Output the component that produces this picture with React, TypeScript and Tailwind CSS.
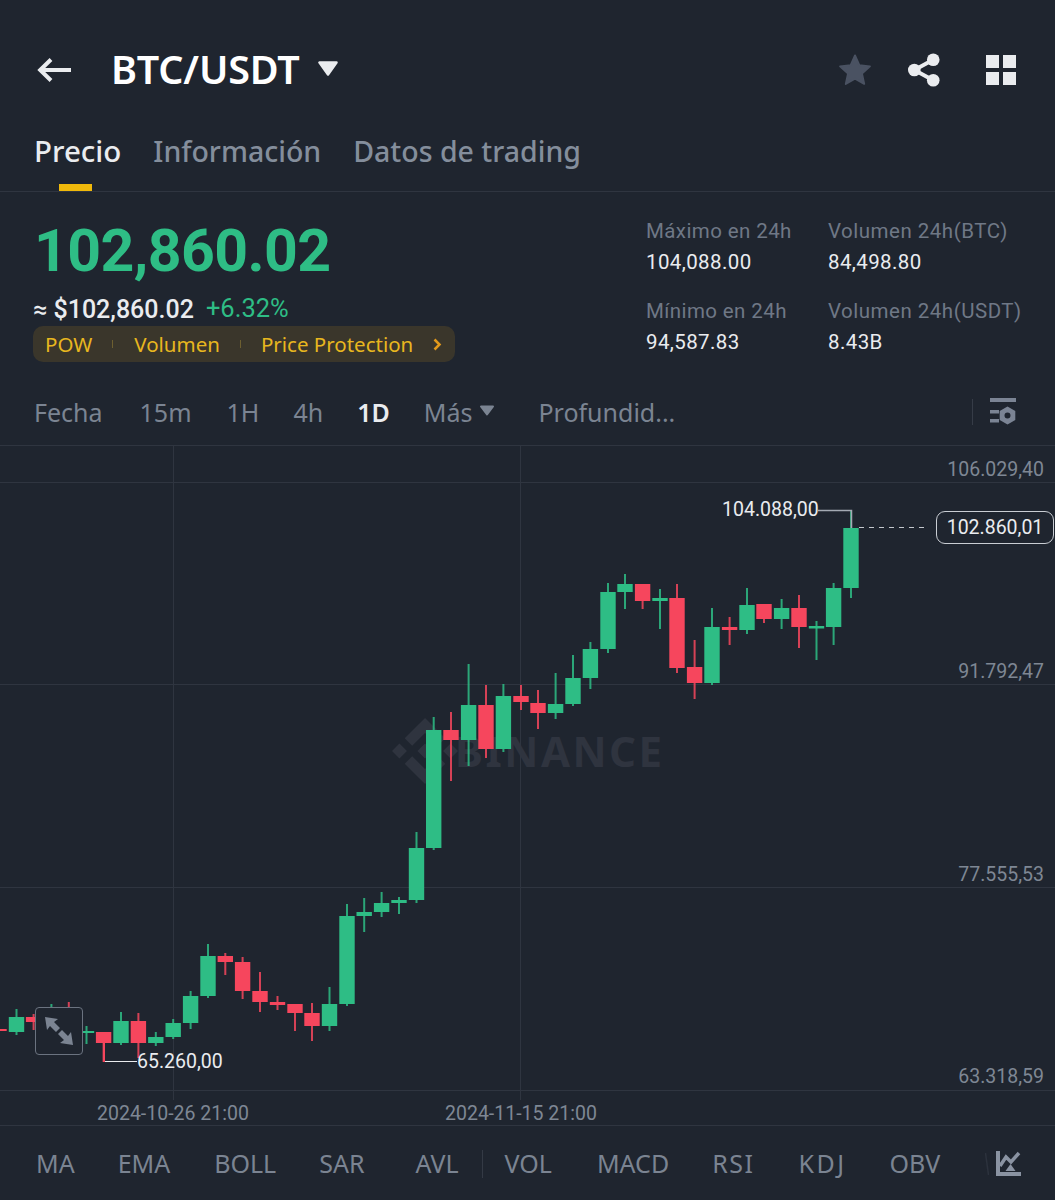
const G = '#2ebd85';
const R = '#f6465d';

// [centre x, wick top, body top, body bottom, wick bottom, green?]
const candles: [number, number, number, number, number, boolean][] = [
  [851, 510, 528, 588, 598, true],
  [833.6, 583, 588, 627, 645, true],
  [816.5, 621, 626, 628.5, 660, true],
  [799, 595, 608, 627, 648, false],
  [781.6, 599, 608, 619, 629, true],
  [764, 604, 604, 619, 623, false],
  [747, 588, 605, 630, 634, true],
  [729.6, 617, 627, 630, 645, false],
  [712, 608, 627, 683, 685, true],
  [694.6, 640, 667, 683, 699, false],
  [677, 584, 598, 668, 673, false],
  [660, 589, 598, 601, 629, true],
  [642.6, 584, 584, 601, 609, false],
  [625, 574, 584, 592, 609, true],
  [608, 583, 592, 649, 653, true],
  [590.4, 642, 649, 678, 689, true],
  [573, 655, 678, 704, 706, true],
  [555.6, 673, 704, 713, 719, true],
  [538, 690, 703, 713, 729, false],
  [521, 685, 696, 702, 710, false],
  [503.4, 684, 696, 749, 752, true],
  [486, 685, 705, 749, 758, false],
  [468.6, 664, 705, 740, 766, true],
  [451, 712, 730, 740, 781, false],
  [433.7, 717, 730, 848, 850, true],
  [416.5, 832, 848, 900, 903, true],
  [399, 897, 900, 903, 914, true],
  [381.6, 892, 903, 912, 917, true],
  [364.2, 898, 912, 916, 932, true],
  [347, 904, 916, 1004, 1006, true],
  [329.5, 987, 1004, 1026, 1031, true],
  [312, 1003, 1013, 1026, 1041, false],
  [295, 1004, 1004, 1013, 1031, false],
  [277.5, 996, 1002, 1005, 1010, false],
  [260, 972, 991, 1002, 1012, false],
  [242.6, 957, 962, 991, 999, false],
  [225.3, 953, 956, 962, 975, false],
  [208, 944, 956, 996, 998, true],
  [190.6, 991, 996, 1023, 1029, true],
  [173.2, 1019, 1023, 1037, 1039, true],
  [155.8, 1032, 1037, 1043, 1046, true],
  [138.4, 1013, 1021, 1043, 1058, false],
  [121, 1012, 1021, 1043, 1045, true],
  [103.6, 1032, 1032, 1043, 1062, false],
  [86.5, 1026, 1031, 1032.5, 1044, true],
  [68.8, 1002, 1012, 1030, 1040, false],
  [51.4, 1004, 1012, 1030, 1040, true],
  [33.6, 1014, 1017, 1022, 1030, false],
  [16.5, 1009, 1017, 1032, 1035, true],
  [-1, 1024, 1029, 1031, 1045, false],
];

export default function App() {
  return (
    <div className="w-[1055px] h-[1200px] overflow-hidden bg-[#1f252f] font-['Noto_Sans',sans-serif] flex flex-col">
      {/* Header */}
      <div className="h-[70px] mt-[35px] flex items-center pl-[37px] pr-[39px]">
        <svg width="35" height="26" viewBox="0 0 35 26" fill="none" stroke="#eaecef" strokeWidth="4">
          <path d="M34 13H3M14 2.5 3.2 13 14 23.5" />
        </svg>
        <span className="ml-[39px] text-[39.5px] leading-none font-semibold text-white tracking-[-0.2px]">BTC/USDT</span>
        <svg className="ml-[17px] mb-[3px]" width="22" height="15" viewBox="0 0 22 15">
          <path d="M2.5 1.5h17L11 13.5z" fill="#eaecef" stroke="#eaecef" strokeWidth="2.5" strokeLinejoin="round" />
        </svg>
        <div className="ml-auto flex items-center">
          <svg width="34" height="32" viewBox="0 0 36 34" className="mb-[1px]">
            <path d="M18 1.5l4.6 10.4 11.3 1.2-8.5 7.6 2.4 11.1L18 26.1 8.2 31.8l2.4-11.1L2.100 13.100l11.300-1.200z" fill="#4a5262" stroke="#4a5262" strokeWidth="2" strokeLinejoin="round" />
          </svg>
          <svg className="ml-[36px]" width="33" height="34" viewBox="0 0 34 34" fill="#eaecef" stroke="#eaecef">
            <circle cx="26" cy="6.500" r="6.500" stroke="none" />
            <circle cx="6.500" cy="17" r="6.500" stroke="none" />
            <circle cx="26" cy="27.500" r="6.500" stroke="none" />
            <path d="M26 6.500 6.500 17 26 27.500" fill="none" strokeWidth="4" />
          </svg>
          <div className="ml-[45px] grid grid-cols-2 gap-[4px] w-[30px]">
            <div className="h-[13px] bg-[#eaecef]" />
            <div className="h-[13px] bg-[#eaecef]" />
            <div className="h-[13px] bg-[#eaecef]" />
            <div className="h-[13px] bg-[#eaecef]" />
          </div>
        </div>
      </div>

      {/* Tabs */}
      <div className="h-[87px] border-b border-[#2f3540] flex items-start pl-[34px] text-[28.5px] leading-none font-medium relative">
        <div className="mt-[31px] flex items-baseline gap-[32px] text-[#848e9c]">
          <span className="text-[#eaecef] text-[29.5px]">Precio</span>
          <span>Información</span>
          <span>Datos de trading</span>
        </div>
        <div className="absolute left-[59px] bottom-0 w-[33px] h-[7px] bg-[#f0b90b]" />
      </div>

      {/* Stats */}
      <div className="h-[180px] flex">
        <div className="w-[646px] pl-[33px] pt-[26px] flex flex-col">
          <div className="h-[64px] pl-[1px] flex items-center text-[59px] leading-none font-bold text-[#2ebd85] font-['Roboto',sans-serif] tracking-[-0.6px]">
            102,860.02
          </div>
          <div className="mt-[15px] h-[24px] flex items-center font-['Roboto',sans-serif] leading-none">
            <span className="text-[25px] font-medium text-[#eaecef]">≈ $102,860.02</span>
            <span className="ml-[12px] text-[25.5px] text-[#2ebd85]">+6.32%</span>
          </div>
          <div className="mt-[5px] w-[422px] h-[36px] rounded-[10px] bg-[#3a362b] flex items-center pl-[12px] text-[20.5px] text-[#e8b71f] leading-none">
            <span>POW</span>
            <span className="ml-[20px] w-[1px] h-[8px] bg-[#6d5f30]" />
            <span className="ml-[21px]">Volumen</span>
            <span className="ml-[20px] w-[1px] h-[8px] bg-[#6d5f30]" />
            <span className="ml-[20px]">Price Protection</span>
            <svg className="ml-[19px]" width="11" height="13" viewBox="0 0 11 13" fill="none" stroke="#e39a1c" strokeWidth="2.500">
              <path d="M2.500 1.500 7.500 6.500 2.500 11.500" />
            </svg>
          </div>
        </div>
        <div className="w-[182px] pt-[27px] font-['Roboto',sans-serif]">
          <div className="text-[20.5px] leading-[24px] text-[#6f7886] tracking-[0.4px]">Máximo en 24h</div>
          <div className="mt-[7px] text-[20.5px] leading-[24px] text-[#eaecef] tracking-[0.4px]">104,088.00</div>
          <div className="mt-[25px] text-[20.5px] leading-[24px] text-[#6f7886] tracking-[0.4px]">Mínimo en 24h</div>
          <div className="mt-[7px] text-[20.5px] leading-[24px] text-[#eaecef] tracking-[0.4px]">94,587.83</div>
        </div>
        <div className="pt-[27px] font-['Roboto',sans-serif]">
          <div className="text-[20.5px] leading-[24px] text-[#6f7886] tracking-[0.5px]">Volumen 24h(BTC)</div>
          <div className="mt-[7px] text-[20.5px] leading-[24px] text-[#eaecef] tracking-[0.4px]">84,498.80</div>
          <div className="mt-[25px] text-[20.5px] leading-[24px] text-[#6f7886] tracking-[0.5px]">Volumen 24h(USDT)</div>
          <div className="mt-[7px] text-[20.5px] leading-[24px] text-[#eaecef] tracking-[0.4px]">8.43B</div>
        </div>
      </div>

      {/* Timeframes */}
      <div className="h-[74px] pt-[6px] border-b border-[#2f3540] flex items-center pl-[34px] pr-[38px] text-[25px] leading-none text-[#7b8492]">
        <span className="mt-[2px]">Fecha</span>
        <span className="mt-[2px] ml-[37px]">15m</span>
        <span className="mt-[2px] ml-[35px]">1H</span>
        <span className="mt-[2px] ml-[34px]">4h</span>
        <span className="mt-[2px] ml-[34px] font-semibold text-[#eaecef]">1D</span>
        <span className="mt-[2px] ml-[34px]">Más</span>
        <svg className="ml-[7px] mb-[3px]" width="16" height="11" viewBox="0 0 16 11">
          <path d="M2 1.500h12L8 9.500z" fill="#7b8492" stroke="#7b8492" strokeWidth="2" strokeLinejoin="round" />
        </svg>
        <span className="mt-[2px] ml-[43px]">Profundid...</span>
        <span className="ml-auto w-[1px] h-[26px] bg-[#363c47]" />
        <svg className="ml-[17px]" width="27" height="27" viewBox="0 0 27 27" fill="#7b8494">
          <path d="M0 0h26v4H0zM0 12h9v3.500H0zM0 21h9v3.500H0z" />
          <path fillRule="evenodd" d="M17.500 8.500l7.800 4.500v9l-7.800 4.500-7.800-4.500v-9zM17.500 14.500a3 3 0 1 0 0 6 3 3 0 0 0 0-6z" />
        </svg>
      </div>

      {/* Chart */}
      <div className="relative h-[680px] border-b border-[#2f3540] overflow-hidden font-['Roboto',sans-serif] text-[19.5px] leading-none">
        <div className="absolute left-[392px] top-[272px] flex items-center">
          <svg width="66" height="66" viewBox="0 0 126.610 126.610" fill="#2f343f">
            <path d="M38.730 53.200l24.590-24.580 24.600 24.600 14.300-14.310L63.320 0 24.420 38.900zM0 63.310l14.300-14.310 14.310 14.310-14.310 14.300zM38.730 73.410l24.590 24.590 24.600-24.600 14.310 14.290-38.900 38.910-38.910-38.880-.02-.02zM98.010 63.310l14.300-14.310 14.300 14.310-14.300 14.300zM77.830 63.300l-14.510-14.520L52.590 59.510l-1.240 1.230-2.540 2.540 14.510 14.500 14.510-14.470z" />
          </svg>
          <span className="ml-[-3px] font-['Noto_Sans',sans-serif] font-bold text-[42px] tracking-[2.500px] text-[#2f343f]">BINANCE</span>
        </div>

        <svg className="absolute left-0 top-0" width="1055" height="680" viewBox="0 446 1055 680">
          <g stroke="#2f3540" strokeWidth="1">
            <path d="M0 482.500H1055M0 684.500H1055M0 887.500H1055M0 1090.500H1055" />
            <path d="M173.500 446V1100M520.500 446V1100" />
          </g>
          {candles.map(([x, wt, bt, bb, wb, up]) => (
            <g key={x} fill={up ? G : R}>
              <rect x={x - 1} y={wt} width="2" height={wb - wt} opacity={0.85} />
              <rect x={x - 7.700} y={bt} width="15.400" height={Math.max(bb - bt, 2)} />
            </g>
          ))}
          <path d="M818 510.500H851.500V528" fill="none" stroke="#a4aab3" strokeWidth="1.500" />
          <path d="M859 527.500H925" fill="none" stroke="#c4c8ce" strokeWidth="1" strokeDasharray="5 5" />
          <path d="M103.500 1043V1061.500H137" fill="none" stroke="#eaecef" strokeWidth="1" />
          <rect x={103} y={1043} width="2" height="19" fill={R} />
        </svg>

        <div className="absolute right-[11px] top-[14px] text-[#7e8794]">106.029,40</div>
        <div className="absolute right-[11px] top-[216px] text-[#7e8794]">91.792,47</div>
        <div className="absolute right-[11px] top-[419px] text-[#7e8794]">77.555,53</div>
        <div className="absolute right-[11px] top-[621px] text-[#7e8794]">63.318,59</div>
        <div className="absolute left-[722px] top-[54px] text-[#eaecef]">104.088,00</div>
        <div className="absolute left-[936px] top-[65px] w-[118px] h-[33px] rounded-[9px] border border-[#c9cdd3] bg-[#1f252f] flex items-center justify-center text-[#eaecef]">102.860,01</div>
        <div className="absolute left-[137px] top-[606px] text-[#eaecef]">65.260,00</div>
        <div className="absolute left-[97px] top-[658px] text-[#7e8794]">2024-10-26 21:00</div>
        <div className="absolute left-[445px] top-[658px] text-[#7e8794]">2024-11-15 21:00</div>

        <div className="absolute left-[35px] top-[561px] w-[48px] h-[48px] rounded-[4px] border border-[#6b7380] bg-[#1f252f] flex items-center justify-center">
          <svg width="28" height="28" viewBox="0 0 28 28" fill="#7b8492">
            <path d="M0 0 13 2 9 5 15 11 11 15 5 9 2 13z" />
            <path d="M28 28 15 26 19 23 13 17 17 13 23 19 26 15z" />
          </svg>
        </div>
      </div>

      {/* Indicators */}
      <div className="flex-1 pt-[1px] flex items-center pl-[36px] text-[25px] leading-none text-[#7b8492]">
        <span>MA</span>
        <span className="ml-[43px]">EMA</span>
        <span className="ml-[44px]">BOLL</span>
        <span className="ml-[43px]">SAR</span>
        <span className="ml-[51px]">AVL</span>
        <span className="ml-[23px] w-[1px] h-[28px] bg-[#343a45]" />
        <span className="ml-[22px]">VOL</span>
        <span className="ml-[45px]">MACD</span>
        <span className="ml-[43px] tracking-[1.500px]">RSI</span>
        <span className="ml-[44px] tracking-[2.500px]">KDJ</span>
        <span className="ml-[43px]">OBV</span>
        <svg className="ml-[45px]" width="4" height="22" viewBox="0 0 4 22" fill="none" stroke="#2c323d" strokeWidth="1.500">
          <path d="M0.500 0 3.500 22" />
        </svg>
        <svg className="ml-[7px]" width="25" height="25" viewBox="0 0 25 25" fill="#8a93a2">
          <path d="M0 0h4v21h21v4H0z" />
          <path d="M4 15 10 6l5 5 8-9" fill="none" stroke="#8a93a2" strokeWidth="3.500" />
          <path d="M14.500 13 19.500 20h-10z" />
        </svg>
      </div>
    </div>
  );
}
